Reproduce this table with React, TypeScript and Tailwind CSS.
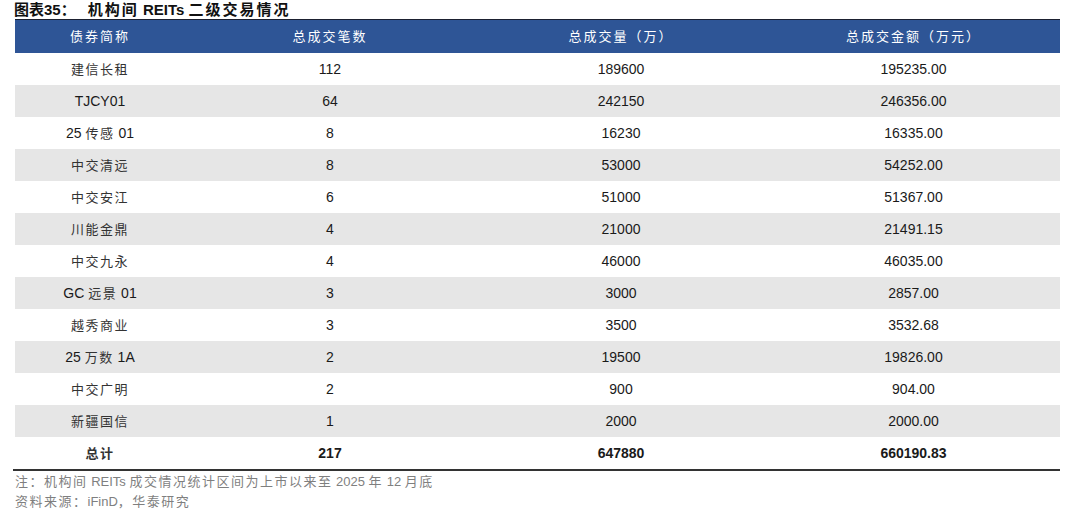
import type { ReactNode } from 'react';

const rows = [
  ['建信长租', '112', '189600', '195235.00'],
  ['TJCY01', '64', '242150', '246356.00'],
  ['25 传感 01', '8', '16230', '16335.00'],
  ['中交清远', '8', '53000', '54252.00'],
  ['中交安江', '6', '51000', '51367.00'],
  ['川能金鼎', '4', '21000', '21491.15'],
  ['中交九永', '4', '46000', '46035.00'],
  ['GC 远景 01', '3', '3000', '2857.00'],
  ['越秀商业', '3', '3500', '3532.68'],
  ['25 万数 1A', '2', '19500', '19826.00'],
  ['中交广明', '2', '900', '904.00'],
  ['新疆国信', '1', '2000', '2000.00'],
];

const headers = ['债券简称', '总成交笔数', '总成交量（万）', '总成交金额（万元）'];

const font = "font-['Liberation_Sans','Noto_Sans_CJK_SC',sans-serif]";

// the source PDF spaces out the CJK glyphs but not the latin/digits
function Spaced({ text, cjk }: { text: string; cjk: string }) {
  const parts: ReactNode[] = text.split(/([\u3000-\u9fff\uff00-\uffef]+)/).map((p, i) =>
    /[\u3000-\u9fff\uff00-\uffef]/.test(p) ? (
      <span key={i} className={cjk}>
        {p}
      </span>
    ) : (
      <span key={i}>{p}</span>
    )
  );
  return <>{parts}</>;
}

function Row({ cells, shaded, bold }: { cells: string[]; shaded?: boolean; bold?: boolean }) {
  return (
    <div
      className={`grid grid-cols-[170px_290px_292px_1fr] h-8 items-center text-[14px] text-[#1a1a1a] ${
        shaded ? 'bg-[#e6e6e6]' : 'bg-white'
      } ${bold ? 'font-bold' : ''}`}
    >
      {cells.map((c, i) => (
        <div key={i} className="text-center">
          <Spaced text={c} cjk="text-[13px] tracking-[1.5px] text-[#333]" />
        </div>
      ))}
    </div>
  );
}

export default function App() {
  return (
    <div className={`w-[1080px] h-[512px] bg-white ${font} pl-[15px] pr-[20px]`}>
      <div className="h-[19px] flex items-end">
        <h1 className="text-[15px] font-bold text-[#111] leading-[18px] -ml-[1px]">
          <Spaced text="图表35：" cjk="tracking-[0px]" />
          <span className="ml-[12px]">
            <Spaced text="机构间 REITs 二级交易情况" cjk="tracking-[2px]" />
          </span>
        </h1>
      </div>

      {/* header band */}
      <div className="border-t border-[#1b2030] bg-[#2e5596] grid grid-cols-[170px_290px_292px_1fr] h-[34px] items-center text-[13px] text-white">
        {headers.map((h) => (
          <div key={h} className="text-center tracking-[2px]">
            {h}
          </div>
        ))}
      </div>

      {rows.map((r, i) => (
        <Row key={i} cells={r} shaded={i % 2 === 1} />
      ))}
      <Row cells={['总计', '217', '647880', '660190.83']} bold />

      <div className="h-[2px] bg-[#333] -ml-[2px]" />

      <div className="text-[13px] text-[#7f7f7f] leading-5 mt-[1px]">
        <p>
          <Spaced text="注：机构间 REITs 成交情况统计区间为上市以来至 2025 年 12 月底" cjk="tracking-[1.5px]" />
        </p>
        <p>
          <Spaced text="资料来源：iFinD，华泰研究" cjk="tracking-[1.5px]" />
        </p>
      </div>
    </div>
  );
}
